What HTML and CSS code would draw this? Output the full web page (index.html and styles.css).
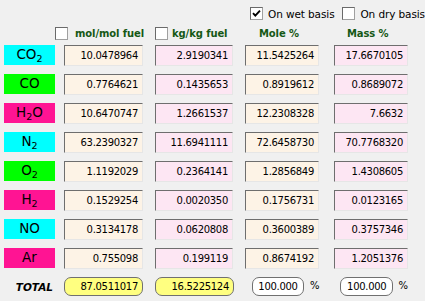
FILE: index.html
```html
<!DOCTYPE html>
<html>
<head>
<meta charset="utf-8">
<link rel="stylesheet" href="styles.css">
</head>
<body>
<div class="page">
  <div class="basis">
    <label class="opt opt-wet"><span class="cb"><svg width="11" height="11" viewBox="0 0 11 11"><path d="M2 5.2 L4.3 7.6 L9 2.6" fill="none" stroke="#000" stroke-width="1.9"/></svg></span>On wet basis</label>
    <label class="opt"><span class="cb"></span>On dry basis</label>
  </div>
  <div class="head">
    <div class="hcell h1"><span class="cb"></span><span class="htext">mol/mol fuel</span></div>
    <div class="hcell h2"><span class="cb"></span><span class="htext">kg/kg fuel</span></div>
    <div class="hcell h3"><span class="htext">Mole %</span></div>
    <div class="hcell h4"><span class="htext">Mass %</span></div>
  </div>
  <div class="grid">
    <div class="sp cyan"><span>CO<sub>2</sub></span></div>
    <div class="fld beige">10.0478964</div>
    <div class="fld pink w78">2.9190341</div>
    <div class="fld beige w74">11.5425264</div>
    <div class="fld pink w74">17.6670105</div>

    <div class="sp green"><span>CO</span></div>
    <div class="fld beige">0.7764621</div>
    <div class="fld pink w78">0.1435653</div>
    <div class="fld beige w74">0.8919612</div>
    <div class="fld pink w74">0.8689072</div>

    <div class="sp magenta"><span>H<sub>2</sub>O</span></div>
    <div class="fld beige">10.6470747</div>
    <div class="fld pink w78">1.2661537</div>
    <div class="fld beige w74">12.2308328</div>
    <div class="fld pink w74">7.6632</div>

    <div class="sp cyan"><span>N<sub>2</sub></span></div>
    <div class="fld beige">63.2390327</div>
    <div class="fld pink w78">11.6941111</div>
    <div class="fld beige w74">72.6458730</div>
    <div class="fld pink w74">70.7768320</div>

    <div class="sp green"><span>O<sub>2</sub></span></div>
    <div class="fld beige">1.1192029</div>
    <div class="fld pink w78">0.2364141</div>
    <div class="fld beige w74">1.2856849</div>
    <div class="fld pink w74">1.4308605</div>

    <div class="sp magenta"><span>H<sub>2</sub></span></div>
    <div class="fld beige">0.1529254</div>
    <div class="fld pink w78">0.0020350</div>
    <div class="fld beige w74">0.1756731</div>
    <div class="fld pink w74">0.0123165</div>

    <div class="sp cyan"><span>NO</span></div>
    <div class="fld beige">0.3134178</div>
    <div class="fld pink w78">0.0620808</div>
    <div class="fld beige w74">0.3600389</div>
    <div class="fld pink w74">0.3757346</div>

    <div class="sp magenta"><span>Ar</span></div>
    <div class="fld beige">0.755098</div>
    <div class="fld pink w78">0.199119</div>
    <div class="fld beige w74">0.8674192</div>
    <div class="fld pink w74">1.2051376</div>

    <div class="total-label">TOTAL</div>
    <div class="tot yellow">87.0511017</div>
    <div class="tot yellow w78">16.5225124</div>
    <div class="pct pct1"><span class="tot white">100.000</span><span class="psign">%</span></div>
    <div class="pct pct2"><span class="tot white">100.000</span><span class="psign">%</span></div>
  </div>
</div>
</body>
</html>
```

FILE: styles.css
```css
html, body {
  margin: 0;
  padding: 0;
  background: #f0f0f0;
}
body {
  width: 425px;
  height: 301px;
  overflow: hidden;
  font-family: "DejaVu Sans", Verdana, sans-serif;
  font-size: 10px;
  color: #000;
}
.page {
  padding-top: 7px;
}
.basis {
  display: flex;
  padding-left: 250px;
  height: 13px;
}
.opt {
  display: flex;
  align-items: center;
  gap: 5px;
  font-size: 10.5px;
  letter-spacing: -0.1px;
  white-space: nowrap;
}
.opt-wet {
  width: 95px;
}
.cb {
  box-sizing: border-box;
  width: 13px;
  height: 13px;
  flex: none;
  background: #fff;
  border: 1px solid #6a6a6a;
  border-right-color: #a0a0a0;
  border-bottom-color: #a0a0a0;
  display: flex;
  align-items: center;
  justify-content: center;
}
.head {
  display: flex;
  margin-top: 7px;
  height: 13px;
  align-items: center;
}
.hcell {
  display: flex;
  align-items: center;
  white-space: nowrap;
}
.htext {
  font-weight: bold;
  color: #155815;
  font-size: 10px;
  letter-spacing: -0.1px;
}
.h1 { margin-left: 55px; width: 100px; gap: 7px; }
.h2 { width: 104px; gap: 4px; }
.h3 { width: 88px; }
.grid {
  margin-top: 5px;
  padding-left: 4px;
  display: grid;
  grid-template-columns: 60px 91px 90px 89px 74px;
  grid-auto-rows: 21px;
  row-gap: 8px;
}
.sp {
  width: 51px;
  height: 20px;
  display: flex;
  align-items: center;
  justify-content: center;
  font-size: 13.5px;
  line-height: 1;
}
.sp sub {
  font-size: 9.5px;
  vertical-align: -3px;
  line-height: 0;
}
.cyan { background: #00ffff; }
.green { background: #00ff00; }
.magenta { background: #ff1493; }
.fld {
  box-sizing: border-box;
  width: 79px;
  height: 21px;
  border: 1px solid;
  border-color: #6e6e6e #e6e6e6 #e6e6e6 #6e6e6e;
  display: flex;
  align-items: center;
  justify-content: flex-end;
  padding-right: 4px;
  letter-spacing: -0.3px;
}
.w78 { width: 78px; }
.w74 { width: 74px; }
.beige { background: #fdf3e6; }
.pink { background: #fde6f3; }
.total-label {
  width: 51px;
  height: 19px;
  display: flex;
  align-items: center;
  justify-content: flex-end;
  padding-right: 2px;
  box-sizing: border-box;
  font-weight: bold;
  font-style: italic;
  font-size: 10.5px;
}
.tot {
  box-sizing: border-box;
  width: 79px;
  height: 19px;
  border: 1.5px solid #707070;
  border-radius: 7px;
  display: flex;
  align-items: center;
  justify-content: flex-end;
  padding-right: 4px;
  letter-spacing: -0.3px;
}
.yellow { background: #ffff80; }
.white { background: #fff; }
.pct {
  display: flex;
  align-items: flex-start;
  height: 19px;
}
.pct .tot {
  justify-content: center;
  padding-right: 0;
}
.pct1 { padding-left: 7px; }
.pct1 .tot { width: 52px; }
.pct2 { padding-left: 6px; }
.pct2 .tot { width: 54px; }
.psign {
  font-size: 10px;
  margin-left: 6px;
  margin-top: 3px;
}
.pct2 .psign { margin-left: 5px; }
```
